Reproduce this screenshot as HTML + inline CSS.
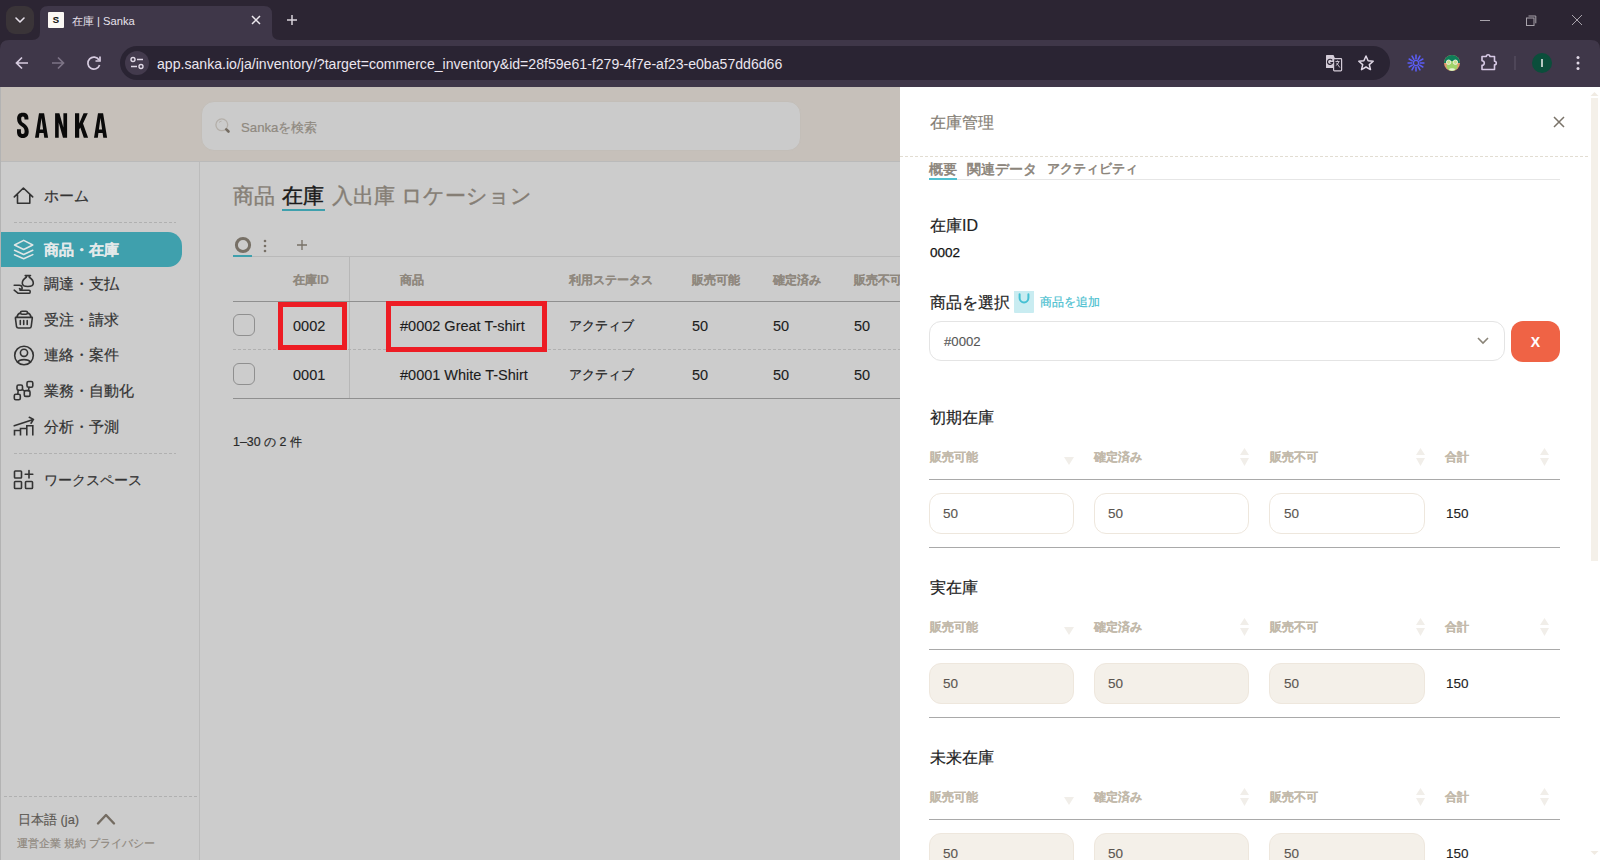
<!DOCTYPE html>
<html lang="ja">
<head>
<meta charset="utf-8">
<title>在庫 | Sanka</title>
<style>
*{box-sizing:border-box;margin:0;padding:0}
html,body{width:1600px;height:860px;overflow:hidden;background:#fff;font-family:"Liberation Sans",sans-serif;}
.a{position:absolute}
.nw{white-space:nowrap;-webkit-text-stroke:0.2px currentColor}
[style*="font-weight:bold"]{-webkit-text-stroke:0.1px currentColor}
.lat{-webkit-text-stroke:0.12px currentColor !important}
.st5{-webkit-text-stroke:0.55px currentColor !important}
/* chrome */
#tabstrip{left:0;top:0;width:1600px;height:40px;background:#2c2533}
#toolbar{left:0;top:40px;width:1600px;height:47px;background:#3f3749}
/* page */
#page{left:0;top:87px;width:1600px;height:773px;background:#cccccc;overflow:hidden}
#hdr{left:0;top:0;width:900px;height:74px;background:#c6c0ba;border-bottom:1px solid #bfb9b2}
#side{left:0;top:75px;width:200px;height:698px;background:#cccccc;border-right:1px solid #bdbdbd;border-left:1px solid #b5b5b5}
#main{left:200px;top:75px;width:700px;height:698px;background:#cccccc}
#panel{left:900px;top:0;width:700px;height:773px;background:#fff}
.dash{height:1px;background:repeating-linear-gradient(90deg,#b3b3b3 0 3px,transparent 3px 5px)}
.cj{font-family:"Liberation Sans",sans-serif}
</style>
</head>
<body>
<!-- ================= CHROME ================= -->
<div id="tabstrip" class="a"></div>
<div id="toolbar" class="a"></div>
<!-- tab dropdown -->
<div class="a" style="left:6px;top:6px;width:28px;height:28px;border-radius:9px;background:#3a3438"></div>
<svg class="a" style="left:0;top:0" width="1600" height="87">
  <path d="M0 40 L9 40 Q0 40 0 49 Z" fill="#2c2533"/>
  <path d="M1600 40 L1591 40 Q1600 40 1600 49 Z" fill="#2c2533"/>
  <path d="M16 18 L20 22 L24 18" fill="none" stroke="#e6e0ea" stroke-width="1.6" stroke-linecap="round" stroke-linejoin="round"/>
  <!-- active tab shape -->
  <path d="M32 40 Q40 40 40 32 L40 14 Q40 6 48 6 L264 6 Q272 6 272 14 L272 32 Q272 40 280 40 Z" fill="#3f3749"/>
  <!-- tab close -->
  <path d="M252 16 L260 24 M260 16 L252 24" stroke="#ece8ee" stroke-width="1.5"/>
  <!-- new tab plus -->
  <path d="M292 15 L292 25 M287 20 L297 20" stroke="#d9d4dc" stroke-width="1.5"/>
  <!-- window controls -->
  <path d="M1480 20.5 L1490 20.5" stroke="#a8a3ab" stroke-width="1"/>
  <rect x="1526.5" y="18" width="7.5" height="7.5" fill="none" stroke="#a8a3ab" stroke-width="1"/>
  <path d="M1528.5 16 L1535.8 16 L1535.8 23.3" fill="none" stroke="#a8a3ab" stroke-width="1"/>
  <path d="M1572 15 L1582 25 M1582 15 L1572 25" stroke="#a8a3ab" stroke-width="1"/>
  <!-- back / fwd / reload -->
  <path d="M28 63 L16.5 63 M22 57.5 L16.5 63 L22 68.5" fill="none" stroke="#d7cce0" stroke-width="1.7"/>
  <path d="M52 63 L63.5 63 M58 57.5 L63.5 63 L58 68.5" fill="none" stroke="#7d7486" stroke-width="1.7"/>
  <path d="M99 60 A6 6 0 1 0 99.6 65" fill="none" stroke="#d7cce0" stroke-width="1.7"/>
  <path d="M100 56.5 L100 61 L95.5 61" fill="none" stroke="#d7cce0" stroke-width="1.7"/>
  <!-- omnibox -->
  <rect x="120" y="46" width="1270" height="34" rx="17" fill="#2a2433"/>
  <circle cx="137" cy="63" r="12" fill="#433a4d"/>
  <circle cx="133" cy="59.5" r="2" fill="none" stroke="#e0d8e6" stroke-width="1.4"/>
  <path d="M137 59.5 L143 59.5 M131 66.5 L137 66.5" stroke="#e0d8e6" stroke-width="1.4"/>
  <circle cx="141" cy="66.5" r="2" fill="none" stroke="#e0d8e6" stroke-width="1.4"/>
  <!-- translate -->
  <path d="M1326.5 55 L1333.5 55 L1335 58.5 L1335 68 L1326.5 68 Q1326 68 1326 67.5 L1326 55.5 Q1326 55 1326.5 55 Z" fill="#d4ccd8"/>
  <rect x="1333.6" y="58.6" width="8" height="12.2" rx="0.8" fill="#2a2433" stroke="#d4ccd8" stroke-width="1.2"/>
  <path d="M1332.2 60.3 A2.6 2.6 0 1 0 1332.6 62.6 L1330.3 62.6" fill="none" stroke="#2a2433" stroke-width="1.2"/>
  <path d="M1335.5 61.5 L1339.5 61.5 M1337.5 60.5 L1337.5 61.5 M1338.8 61.8 Q1338 64.5 1335.8 65.5 M1336.5 62.8 L1339.8 67.5" fill="none" stroke="#d4ccd8" stroke-width="0.9"/>
  <!-- star -->
  <path d="M1366 56 L1368.1 60.8 L1373.2 61.2 L1369.3 64.6 L1370.5 69.6 L1366 67 L1361.5 69.6 L1362.7 64.6 L1358.8 61.2 L1363.9 60.8 Z" fill="none" stroke="#e0d8e6" stroke-width="1.5" stroke-linejoin="round"/>
  <!-- sunburst -->
  <g stroke="#5b5df5" stroke-width="1.6" stroke-linecap="round"><path d="M1420.30 63.00 L1423.90 63.00 M1419.72 65.15 L1422.84 66.95 M1418.15 66.72 L1419.95 69.84 M1416.00 67.30 L1416.00 70.90 M1413.85 66.72 L1412.05 69.84 M1412.28 65.15 L1409.16 66.95 M1411.70 63.00 L1408.10 63.00 M1412.28 60.85 L1409.16 59.05 M1413.85 59.28 L1412.05 56.16 M1416.00 58.70 L1416.00 55.10 M1418.15 59.28 L1419.95 56.16 M1419.72 60.85 L1422.84 59.05"/></g>
  <circle cx="1416" cy="63" r="2.6" fill="none" stroke="#5b5df5" stroke-width="1.3"/>
  <!-- frog -->
  <clipPath id="fc"><circle cx="1452" cy="63" r="8"/></clipPath>
  <g clip-path="url(#fc)">
    <rect x="1444" y="55" width="16" height="16" fill="#e49a6c"/>
    <rect x="1444" y="55" width="16" height="8" fill="#0e7d58"/>
    <ellipse cx="1452" cy="66" rx="5.6" ry="5" fill="#9fd36a"/>
    <ellipse cx="1452" cy="69.5" rx="3" ry="1.3" fill="#e8f4d8"/>
  </g>
  <circle cx="1448.6" cy="62.2" r="2.2" fill="#c8e28a" stroke="#f1f1e8" stroke-width="0.9"/>
  <circle cx="1455.4" cy="62.2" r="2.2" fill="#c8e28a" stroke="#f1f1e8" stroke-width="0.9"/>
  <!-- puzzle -->
  <path d="M1482 56.5 L1486.3 56.5 A1.8 1.8 0 0 1 1489.9 56.5 L1494.5 56.5 L1494.5 61.2 A1.8 1.8 0 0 1 1494.5 64.8 L1494.5 69.5 L1482 69.5 L1482 65.3 A2.3 2.3 0 0 0 1482 60.7 Z" fill="none" stroke="#d6c8e4" stroke-width="1.6" stroke-linejoin="round"/>
  <path d="M1515 56 L1515 70" stroke="#5f5669" stroke-width="1"/>
  <circle cx="1542" cy="63" r="10" fill="#0b4e3b"/>
  <path d="M1542 59 L1542 67" stroke="#f0f0f0" stroke-width="1.5"/>
  <circle cx="1578" cy="57.5" r="1.5" fill="#e0d8e6"/>
  <circle cx="1578" cy="63" r="1.5" fill="#e0d8e6"/>
  <circle cx="1578" cy="68.5" r="1.5" fill="#e0d8e6"/>
</svg>
<div class="a" style="left:48px;top:12px;width:16px;height:16px;background:#fbf8f4;border-radius:1px;"></div>
<div class="a nw lat" style="left:48px;top:12px;width:16px;height:16px;line-height:16px;text-align:center;font-size:9.5px;font-weight:bold;color:#111">S</div>
<div class="a nw" style="left:72px;top:13px;font-size:11.2px;line-height:16px;color:#e8e2ec;-webkit-text-stroke:0">在庫 | Sanka</div>
<div class="a nw" style="left:157px;top:55px;font-size:14.1px;line-height:18px;color:#ebe6ef;-webkit-text-stroke:0">app.sanka.io/ja/inventory/?target=commerce_inventory&amp;id=28f59e61-f279-4f7e-af23-e0ba57dd6d66</div>


<!-- ================= PAGE ================= -->
<div class="a" style="left:0;top:87px;width:900px;height:74px;background:#c6c0ba"></div>
<div class="a" style="left:0;top:161px;width:900px;height:1px;background:#bababa"></div>
<svg class="a" style="left:186px;top:163px" width="14" height="10"><path d="M4.8 7 L10.2 7 L7.5 4 Z" fill="#c2bcb4"/></svg>
<svg class="a" style="left:186px;top:786px" width="14" height="10"><path d="M5 4 L10 4 L7.5 6.8 Z" fill="#c2bcb4"/></svg>
<div class="a" style="left:0;top:162px;width:900px;height:698px;background:#cccccc"></div>
<div class="a" style="left:0;top:87px;width:1px;height:773px;background:#b3b3b3"></div>
<div class="a" style="left:199px;top:162px;width:1px;height:698px;background:#bcbcbc"></div>
<!-- logo -->
<svg class="a" style="left:0;top:87px" width="200" height="74">
  <g fill="#0a0a0a" transform="translate(0,-87)">
    <path d="M28.4 119.5 L28.4 118.2 C28.4 114.5 26.6 112.7 22.8 112.7 C19 112.7 17.1 114.8 17.1 118.8 C17.1 122.6 18.8 124.4 21.8 126.6 C24 128.2 24.6 129.2 24.6 131.6 C24.6 133.3 24 134.1 22.8 134.1 C21.5 134.1 20.9 133.2 20.9 131.4 L20.9 129.3 L17 129.3 L17 131.6 C17 135.8 18.9 138.1 22.8 138.1 C26.7 138.1 28.7 135.9 28.7 131.6 C28.7 127.7 27.2 125.8 23.8 123.3 C21.8 121.9 21.2 120.8 21.2 118.9 C21.2 117.4 21.8 116.6 22.8 116.6 C24 116.6 24.5 117.4 24.5 119.1 L24.5 119.5 Z"/>
    <path fill-rule="evenodd" d="M35 137.8 L39 113.2 L44.1 113.2 L48.1 137.8 L44.3 137.8 L43.6 133.1 L39.4 133.1 L38.8 137.8 Z M39.9 129.5 L43.1 129.5 L41.5 118 Z"/>
    <path d="M55.1 113.2 L59.4 113.2 L63.4 127.6 L63.4 113.2 L67.1 113.2 L67.1 137.8 L63 137.8 L58.7 122.4 L58.7 137.8 L55.1 137.8 Z"/>
    <path d="M75 113.2 L79.2 113.2 L79.2 123.4 L83.6 113.2 L87.8 113.2 L83 123.5 L88.1 137.8 L83.8 137.8 L80.3 127.4 L79.2 129.6 L79.2 137.8 L75 137.8 Z"/>
    <path fill-rule="evenodd" d="M94 137.8 L98 113.2 L103.1 113.2 L107.1 137.8 L103.3 137.8 L102.6 133.1 L98.4 133.1 L97.8 137.8 Z M98.9 129.5 L102.1 129.5 L100.5 118 Z"/>
  </g>
</svg>
<!-- search -->
<div class="a" style="left:201px;top:101px;width:600px;height:50px;border-radius:13px;background:#cbcbcb;border:1px solid #c3beb8"></div>
<svg class="a" style="left:210px;top:114px" width="24" height="24">
  <circle cx="11.8" cy="10.8" r="5.9" fill="none" stroke="#b4afa9" stroke-width="1.3"/>
  <path d="M9 8.5 A3.5 3.5 0 0 1 11.5 7.2" fill="none" stroke="#b4afa9" stroke-width="1"/>
  <path d="M16.3 15.3 L18.5 17.5" stroke="#746c62" stroke-width="2.6" stroke-linecap="round"/>
</svg>
<div class="a nw" style="left:241px;top:119px;font-size:13.2px;line-height:18px;color:#8f8980">Sankaを検索</div>

<!-- sidebar -->
<div class="a" style="left:1px;top:232px;width:181px;height:35px;background:#3fa0ad;border-radius:0 14px 14px 0"></div>
<svg class="a" style="left:0;top:162px" width="200" height="698">
 <g transform="translate(0,-162)" fill="none" stroke="#333" stroke-width="1.6" stroke-linejoin="round" stroke-linecap="round">
  <!-- home -->
  <path d="M14.3 196.9 L23.4 188 L32.7 196.9 M17.5 194.5 L17.5 203.3 L29.8 203.3 L29.8 194.5"/>
  <!-- layers (white) -->
  <g stroke="#e1e6e6" stroke-width="1.5">
   <path d="M14.5 245 L23.7 240.3 L32.8 245 L23.7 249.5 Z"/>
   <path d="M14.5 250.3 L23.7 254.5 L32.8 250.3"/>
   <path d="M14.5 254.8 L23.7 258.7 L32.8 254.6"/>
  </g>
  <!-- hand bag -->
  <path d="M25.2 275.6 L30.5 275.6 M26.3 276 L26.3 277.3 C23.5 279 22.3 281 22.3 283.2 C22.3 285.5 24.5 286.5 27.8 286.5 C31.1 286.5 33.3 285.5 33.3 283.2 C33.3 281 32.1 279 29.3 277.3 L29.3 276"/>
  <path d="M14.2 285.3 L19.3 285.3 C20.5 285.3 22 286.5 22.2 288 C22.3 289.3 21 289.5 19.5 288.7 M14.2 290.2 L18.2 293.3 L29.3 293.3 C30 293.3 30.2 292.8 30.2 291.7 C30.2 290.6 29.8 290.2 29 290.2 L20 290.2"/>
  <!-- basket -->
  <rect x="20.5" y="311.3" width="7" height="3" rx="1.5"/>
  <path d="M16.8 317.2 C17.5 314.5 18.5 313.5 20.3 313 M27.7 313 C29.5 313.5 30.5 314.5 31.2 317.2 M15.5 317.4 L32.3 317.4 M15.4 318 L16.5 326.5 Q16.8 328 18.5 328 L29.5 328 Q31 328 31.2 326.5 L32.3 318 M20.3 320.5 L20.3 324.5 M23.7 320.5 L23.7 324.5 M27.2 320.5 L27.2 324.5"/>
  <!-- person -->
  <circle cx="24" cy="355.5" r="9.3"/>
  <circle cx="24" cy="352.8" r="3.6"/>
  <path d="M17.6 362.2 C19.5 358.8 28.5 358.8 30.4 362.2"/>
  <!-- workflow -->
  <rect x="17" y="385" width="5.5" height="5.2" rx="1.5"/>
  <rect x="27" y="381.5" width="5.8" height="5.8" rx="1.5"/>
  <rect x="24.3" y="390.6" width="5.7" height="5.8" rx="1.5"/>
  <rect x="14.3" y="394.3" width="6" height="5.4" rx="1.5"/>
  <path d="M18.2 390.2 L17.8 394.3 M22.5 389.6 L24.3 390.8 M28.5 390.6 L29 387.3"/>
  <!-- chart -->
  <path d="M14.2 425.8 L33.3 419.5 M29.3 417.3 L33.5 419.4 L31 423.2"/>
  <path d="M14.5 435.5 L14.5 430.5 L20.5 430.5 L20.5 435.5 M20.5 430.5 L20.5 428.5 L26.8 428.5 L26.8 435.5 M26.8 428.5 L26.8 425.7 L32.8 425.7 L32.8 435.5" stroke-linecap="butt" stroke-linejoin="miter"/>
  <!-- workspace grid -->
  <rect x="14.5" y="471" width="7" height="7" rx="0.8"/>
  <rect x="14.5" y="481.5" width="7" height="7" rx="0.8"/>
  <rect x="25.5" y="481.5" width="7" height="7" rx="0.8"/>
  <path d="M29 470.5 L29 478 M25.2 474.2 L32.8 474.2"/>
  <!-- lang chevron -->
  <path d="M98 823.5 L106 815 L114 823.5" stroke="#746c62" stroke-width="2.4"/>
 </g>
</svg>
<div class="a" style="left:14px;top:222px;width:162px;height:1px;background:repeating-linear-gradient(90deg,#b0b0b0 0 3px,transparent 3px 5px)"></div>
<div class="a" style="left:14px;top:453px;width:162px;height:1px;background:repeating-linear-gradient(90deg,#b0b0b0 0 3px,transparent 3px 5px)"></div>
<div class="a" style="left:4px;top:796px;width:194px;height:1px;background:repeating-linear-gradient(90deg,#b0b0b0 0 3px,transparent 3px 5px)"></div>
<div class="a nw" style="left:44px;top:187px;font-size:15px;line-height:18px;color:#333">ホーム</div>
<div class="a nw" style="left:44px;top:241px;font-size:15px;line-height:18px;color:#e3e9ea;font-weight:bold">商品・在庫</div>
<div class="a nw" style="left:44px;top:275px;font-size:15px;line-height:18px;color:#333">調達・支払</div>
<div class="a nw" style="left:44px;top:311px;font-size:15px;line-height:18px;color:#333">受注・請求</div>
<div class="a nw" style="left:44px;top:346px;font-size:15px;line-height:18px;color:#333">連絡・案件</div>
<div class="a nw" style="left:44px;top:382px;font-size:15px;line-height:18px;color:#333">業務・自動化</div>
<div class="a nw" style="left:44px;top:418px;font-size:15px;line-height:18px;color:#333">分析・予測</div>
<div class="a nw" style="left:44px;top:471px;font-size:14.4px;line-height:18px;color:#333">ワークスペース</div>
<div class="a nw" style="left:18px;top:812px;font-size:12.8px;line-height:16px;color:#5e5a55">日本語 (ja)</div>
<div class="a nw" style="left:17px;top:836px;font-size:10.8px;line-height:14px;color:#8f887e">運営企業 規約 プライバシー</div>

<!-- main -->
<div class="a nw" style="left:233px;top:184px;font-size:21px;-webkit-text-stroke:0.4px currentColor;line-height:24px;color:#857e75">商品</div>
<div class="a nw" style="left:282px;top:184px;font-size:21px;-webkit-text-stroke:0.4px currentColor;line-height:24px;color:#1a1a1a">在庫</div>
<div class="a nw" style="left:332px;top:184px;font-size:21px;-webkit-text-stroke:0.4px currentColor;line-height:24px;color:#857e75">入出庫</div>
<div class="a nw" style="left:401px;top:184px;font-size:21px;-webkit-text-stroke:0.4px currentColor;line-height:24px;color:#857e75">ロケーション</div>
<div class="a" style="left:282px;top:209px;width:43px;height:2px;background:#3fa0ad"></div>
<svg class="a" style="left:220px;top:230px" width="100" height="30">
  <circle cx="23" cy="15" r="6.6" fill="none" stroke="#777066" stroke-width="3"/>
  <circle cx="45" cy="11" r="1.3" fill="#777066"/><circle cx="45" cy="16" r="1.3" fill="#777066"/><circle cx="45" cy="21" r="1.3" fill="#777066"/>
  <path d="M82 10 L82 20 M77 15 L87 15" stroke="#777066" stroke-width="1.3"/>
</svg>
<div class="a" style="left:233px;top:256px;width:667px;height:1px;background:#b9b9b9"></div>
<div class="a" style="left:233px;top:255px;width:19px;height:2px;background:#3fa0ad"></div>
<div class="a" style="left:349px;top:257px;width:1px;height:141px;background:#b7b7b7"></div>
<div class="a" style="left:233px;top:301px;width:667px;height:1px;background:#8f8f8f"></div>
<div class="a" style="left:233px;top:349px;width:667px;height:1px;background:repeating-linear-gradient(90deg,#b0b0b0 0 3px,transparent 3px 5px)"></div>
<div class="a" style="left:233px;top:398px;width:667px;height:1px;background:#8f8f8f"></div>
<div class="a nw" style="left:293px;top:272px;font-size:12px;line-height:16px;color:#8f887e;font-weight:bold">在庫ID</div>
<div class="a nw" style="left:400px;top:272px;font-size:12px;line-height:16px;color:#8f887e;font-weight:bold">商品</div>
<div class="a nw" style="left:569px;top:272px;font-size:12px;line-height:16px;color:#8f887e;font-weight:bold">利用ステータス</div>
<div class="a nw" style="left:692px;top:272px;font-size:12px;line-height:16px;color:#8f887e;font-weight:bold">販売可能</div>
<div class="a nw" style="left:773px;top:272px;font-size:12px;line-height:16px;color:#8f887e;font-weight:bold">確定済み</div>
<div class="a nw" style="left:854px;top:272px;font-size:12px;line-height:16px;color:#8f887e;font-weight:bold">販売不可</div>
<div class="a" style="left:233px;top:314px;width:22px;height:22px;border:1px solid #8f8f8f;border-radius:6px"></div>
<div class="a" style="left:233px;top:363px;width:22px;height:22px;border:1px solid #8f8f8f;border-radius:6px"></div>
<div class="a nw lat" style="left:293px;top:317px;font-size:14.5px;line-height:18px;color:#1c1c1c">0002</div>
<div class="a nw lat" style="left:400px;top:317px;font-size:14.5px;line-height:18px;color:#1c1c1c">#0002 Great T-shirt</div>
<div class="a nw" style="left:569px;top:317px;font-size:13.3px;line-height:18px;color:#1c1c1c">アクティブ</div>
<div class="a nw lat" style="left:692px;top:317px;font-size:14.5px;line-height:18px;color:#1c1c1c">50</div>
<div class="a nw lat" style="left:773px;top:317px;font-size:14.5px;line-height:18px;color:#1c1c1c">50</div>
<div class="a nw lat" style="left:854px;top:317px;font-size:14.5px;line-height:18px;color:#1c1c1c">50</div>
<div class="a nw lat" style="left:293px;top:366px;font-size:14.5px;line-height:18px;color:#1c1c1c">0001</div>
<div class="a nw lat" style="left:400px;top:366px;font-size:14.5px;line-height:18px;color:#1c1c1c">#0001 White T-Shirt</div>
<div class="a nw" style="left:569px;top:366px;font-size:13.3px;line-height:18px;color:#1c1c1c">アクティブ</div>
<div class="a nw lat" style="left:692px;top:366px;font-size:14.5px;line-height:18px;color:#1c1c1c">50</div>
<div class="a nw lat" style="left:773px;top:366px;font-size:14.5px;line-height:18px;color:#1c1c1c">50</div>
<div class="a nw lat" style="left:854px;top:366px;font-size:14.5px;line-height:18px;color:#1c1c1c">50</div>
<div class="a nw" style="left:233px;top:434px;font-size:12.4px;line-height:16px;color:#2a2a2a">1–30 の 2 件</div>
<div class="a" style="left:278px;top:302px;width:69px;height:48px;border:5px solid #ed1c24"></div>
<div class="a" style="left:386px;top:301px;width:161px;height:51px;border:5px solid #ed1c24"></div>

<!-- panel -->
<div class="a" style="left:900px;top:87px;width:700px;height:773px;background:#fff"></div>
<div class="a" style="left:1591px;top:98px;width:7px;height:463px;background:#f4f0e9"></div>
<div class="a nw" style="left:930px;top:113px;font-size:16px;line-height:20px;color:#857e75">在庫管理</div>
<svg class="a" style="left:1548px;top:111px" width="22" height="22"><path d="M6 6 L16 16 M16 6 L6 16" stroke="#7a7369" stroke-width="1.5"/></svg>
<div class="a" style="left:900px;top:156px;width:689px;height:1px;background:repeating-linear-gradient(90deg,#e2ddd2 0 3px,transparent 3px 5px)"></div>
<div class="a nw st5" style="left:929px;top:161px;font-size:14px;line-height:16px;color:#8b847a">概要</div>
<div class="a nw st5" style="left:967px;top:161px;font-size:14px;line-height:16px;color:#8b847a">関連データ</div>
<div class="a nw st5" style="left:1047px;top:161px;font-size:13.2px;line-height:16px;color:#8b847a">アクティビティ</div>
<div class="a" style="left:929px;top:179px;width:631px;height:1px;background:#e6e6e6"></div>
<div class="a" style="left:929px;top:178px;width:28px;height:2px;background:#4fc0d0"></div>
<div class="a nw" style="left:930px;top:217px;font-size:16px;line-height:18px;color:#222">在庫ID</div>
<div class="a nw lat" style="left:930px;top:245px;font-size:13.5px;line-height:16px;color:#111;-webkit-text-stroke:0.25px #111 !important">0002</div>
<div class="a nw" style="left:930px;top:294px;font-size:16px;line-height:18px;color:#222">商品を選択</div>
<div class="a" style="left:1014px;top:291px;width:20px;height:22px;background:#c9ecf1;border-radius:0 0 1px 1px"></div>
<svg class="a" style="left:1014px;top:291px" width="20" height="22"><path d="M5.6 3.2 L5.6 7 A4.4 4.4 0 0 0 14.4 7 L14.4 3.2" fill="none" stroke="#45c0d3" stroke-width="2" stroke-linecap="round"/></svg>
<div class="a nw" style="left:1040px;top:294px;font-size:12px;line-height:16px;color:#4bbfd0">商品を追加</div>
<div class="a" style="left:929px;top:321px;width:576px;height:40px;border:1px solid #e4e4e4;border-radius:12px"></div>
<div class="a nw lat" style="left:944px;top:333px;font-size:13.2px;line-height:18px;color:#555">#0002</div>
<svg class="a" style="left:1472px;top:331px" width="22" height="20"><path d="M6 7 L11 12 L16 7" fill="none" stroke="#8a8478" stroke-width="1.6"/></svg>
<div class="a" style="left:1511px;top:321px;width:49px;height:41px;background:#ef6345;border-radius:12px"></div>
<div class="a nw lat" style="left:1511px;top:333px;width:49px;text-align:center;font-size:14px;line-height:18px;color:#fff;font-weight:bold">X</div>
<div class="a nw" style="left:930px;top:409px;font-size:16px;line-height:18px;color:#222">初期在庫</div>
<div class="a nw" style="left:930px;top:449px;font-size:12px;line-height:16px;color:#c2b9aa;font-weight:bold">販売可能</div>
<div class="a nw" style="left:1094px;top:449px;font-size:12px;line-height:16px;color:#c2b9aa;font-weight:bold">確定済み</div>
<div class="a nw" style="left:1270px;top:449px;font-size:12px;line-height:16px;color:#c2b9aa;font-weight:bold">販売不可</div>
<div class="a nw" style="left:1445px;top:449px;font-size:12px;line-height:16px;color:#c2b9aa;font-weight:bold">合計</div>
<svg class="a" style="left:1060px;top:445px" width="500" height="24">
  <path d="M4 12 L14 12 L9 20 Z" fill="#f1eee9"/>
  <path d="M180 10 L189 10 L184.5 3 Z M180 13 L189 13 L184.5 21 Z" fill="#f1eee9"/>
  <path d="M356 10 L365 10 L360.5 3 Z M356 13 L365 13 L360.5 21 Z" fill="#f1eee9"/>
  <path d="M480 10 L489 10 L484.5 3 Z M480 13 L489 13 L484.5 21 Z" fill="#f1eee9"/>
</svg>
<div class="a" style="left:929px;top:479px;width:631px;height:1px;background:#a9a9a9"></div>
<div class="a" style="left:929px;top:493px;width:145px;height:41px;border:1px solid #eee7dd;border-radius:12px;background:#fff"></div>
<div class="a" style="left:1094px;top:493px;width:155px;height:41px;border:1px solid #eee7dd;border-radius:12px;background:#fff"></div>
<div class="a" style="left:1269px;top:493px;width:156px;height:41px;border:1px solid #eee7dd;border-radius:12px;background:#fff"></div>
<div class="a nw lat" style="left:943px;top:505px;font-size:13.5px;line-height:18px;color:#5a5550">50</div>
<div class="a nw lat" style="left:1108px;top:505px;font-size:13.5px;line-height:18px;color:#5a5550">50</div>
<div class="a nw lat" style="left:1284px;top:505px;font-size:13.5px;line-height:18px;color:#5a5550">50</div>
<div class="a nw lat" style="left:1446px;top:505px;font-size:13.5px;line-height:18px;color:#222">150</div>
<div class="a" style="left:929px;top:547px;width:631px;height:1px;background:#a9a9a9"></div>
<div class="a nw" style="left:930px;top:579px;font-size:16px;line-height:18px;color:#222">実在庫</div>
<div class="a nw" style="left:930px;top:619px;font-size:12px;line-height:16px;color:#c2b9aa;font-weight:bold">販売可能</div>
<div class="a nw" style="left:1094px;top:619px;font-size:12px;line-height:16px;color:#c2b9aa;font-weight:bold">確定済み</div>
<div class="a nw" style="left:1270px;top:619px;font-size:12px;line-height:16px;color:#c2b9aa;font-weight:bold">販売不可</div>
<div class="a nw" style="left:1445px;top:619px;font-size:12px;line-height:16px;color:#c2b9aa;font-weight:bold">合計</div>
<svg class="a" style="left:1060px;top:615px" width="500" height="24">
  <path d="M4 12 L14 12 L9 20 Z" fill="#f1eee9"/>
  <path d="M180 10 L189 10 L184.5 3 Z M180 13 L189 13 L184.5 21 Z" fill="#f1eee9"/>
  <path d="M356 10 L365 10 L360.5 3 Z M356 13 L365 13 L360.5 21 Z" fill="#f1eee9"/>
  <path d="M480 10 L489 10 L484.5 3 Z M480 13 L489 13 L484.5 21 Z" fill="#f1eee9"/>
</svg>
<div class="a" style="left:929px;top:649px;width:631px;height:1px;background:#a9a9a9"></div>
<div class="a" style="left:929px;top:663px;width:145px;height:41px;border:1px solid #eee7dd;border-radius:12px;background:#f4f0e9"></div>
<div class="a" style="left:1094px;top:663px;width:155px;height:41px;border:1px solid #eee7dd;border-radius:12px;background:#f4f0e9"></div>
<div class="a" style="left:1269px;top:663px;width:156px;height:41px;border:1px solid #eee7dd;border-radius:12px;background:#f4f0e9"></div>
<div class="a nw lat" style="left:943px;top:675px;font-size:13.5px;line-height:18px;color:#5a5550">50</div>
<div class="a nw lat" style="left:1108px;top:675px;font-size:13.5px;line-height:18px;color:#5a5550">50</div>
<div class="a nw lat" style="left:1284px;top:675px;font-size:13.5px;line-height:18px;color:#5a5550">50</div>
<div class="a nw lat" style="left:1446px;top:675px;font-size:13.5px;line-height:18px;color:#222">150</div>
<div class="a" style="left:929px;top:717px;width:631px;height:1px;background:#a9a9a9"></div>
<div class="a nw" style="left:930px;top:749px;font-size:16px;line-height:18px;color:#222">未来在庫</div>
<div class="a nw" style="left:930px;top:789px;font-size:12px;line-height:16px;color:#c2b9aa;font-weight:bold">販売可能</div>
<div class="a nw" style="left:1094px;top:789px;font-size:12px;line-height:16px;color:#c2b9aa;font-weight:bold">確定済み</div>
<div class="a nw" style="left:1270px;top:789px;font-size:12px;line-height:16px;color:#c2b9aa;font-weight:bold">販売不可</div>
<div class="a nw" style="left:1445px;top:789px;font-size:12px;line-height:16px;color:#c2b9aa;font-weight:bold">合計</div>
<svg class="a" style="left:1060px;top:785px" width="500" height="24">
  <path d="M4 12 L14 12 L9 20 Z" fill="#f1eee9"/>
  <path d="M180 10 L189 10 L184.5 3 Z M180 13 L189 13 L184.5 21 Z" fill="#f1eee9"/>
  <path d="M356 10 L365 10 L360.5 3 Z M356 13 L365 13 L360.5 21 Z" fill="#f1eee9"/>
  <path d="M480 10 L489 10 L484.5 3 Z M480 13 L489 13 L484.5 21 Z" fill="#f1eee9"/>
</svg>
<div class="a" style="left:929px;top:819px;width:631px;height:1px;background:#a9a9a9"></div>
<div class="a" style="left:929px;top:833px;width:145px;height:41px;border:1px solid #eee7dd;border-radius:12px;background:#f4f0e9"></div>
<div class="a" style="left:1094px;top:833px;width:155px;height:41px;border:1px solid #eee7dd;border-radius:12px;background:#f4f0e9"></div>
<div class="a" style="left:1269px;top:833px;width:156px;height:41px;border:1px solid #eee7dd;border-radius:12px;background:#f4f0e9"></div>
<div class="a nw lat" style="left:943px;top:845px;font-size:13.5px;line-height:18px;color:#5a5550">50</div>
<div class="a nw lat" style="left:1108px;top:845px;font-size:13.5px;line-height:18px;color:#5a5550">50</div>
<div class="a nw lat" style="left:1284px;top:845px;font-size:13.5px;line-height:18px;color:#5a5550">50</div>
<div class="a nw lat" style="left:1446px;top:845px;font-size:13.5px;line-height:18px;color:#222">150</div>
<div class="a" style="left:929px;top:887px;width:631px;height:1px;background:#a9a9a9"></div>
<svg class="a" style="left:1588px;top:88px" width="12" height="772">
  <path d="M2.5 8 L6.5 4 L10.5 8 Z" fill="#f0ebe3"/>
  <path d="M2.5 763 L10.5 763 L6.5 767 Z" fill="#f0ebe3"/>
</svg>
</body>
</html>
